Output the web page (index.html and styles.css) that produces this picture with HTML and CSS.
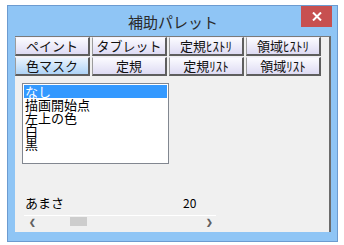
FILE: index.html
```html
<!DOCTYPE html>
<html lang="ja">
<head>
    <meta charset="UTF-8">
    <title>補助パレット</title>
    <link rel="stylesheet" href="styles.css">
</head>
<body>
    <div class="window">
        <div class="titlebar">
            <span class="title">補助パレット</span>
            <span class="close-btn">
                <svg width="10" height="9" viewBox="0 0 10 9"><path d="M1 0.5 L9 8.5 M9 0.5 L1 8.5" stroke="#fff" stroke-width="2"/></svg>
            </span>
        </div>
        <div class="client">
            <div class="tabs">
                <div class="tab">ペイント</div>
                <div class="tab">タブレット</div>
                <div class="tab">定規ﾋｽﾄﾘ</div>
                <div class="tab">領域ﾋｽﾄﾘ</div>
                <div class="tab active">色マスク</div>
                <div class="tab">定規</div>
                <div class="tab">定規ﾘｽﾄ</div>
                <div class="tab">領域ﾘｽﾄ</div>
            </div>

            <ul class="listbox">
                <li class="selected">なし</li>
                <li>描画開始点</li>
                <li>左上の色</li>
                <li>白</li>
                <li>黒</li>
            </ul>

            <div class="param-row">
                <span class="param-label">あまさ</span>
                <span class="param-value">20</span>
            </div>
            <div class="hscroll">
                <span class="arrow">&#10094;</span>
                <div class="track"><div class="thumb"></div></div>
                <span class="arrow">&#10095;</span>
            </div>
        </div>
    </div>
</body>
</html>
```

FILE: styles.css
```css
* {
    margin: 0;
    padding: 0;
    box-sizing: border-box;
}

body {
    background: #fff;
    font-family: "Noto Sans CJK JP", "Liberation Sans", sans-serif;
    color: #000;
}

.window {
    margin: 5px 0 0 7px;
    width: 331px;
    height: 237px;
    border: 1px solid #6c9bd0;
    background: #8fc5f5;
    padding: 0 6px 0 7px;
}

.titlebar {
    position: relative;
    height: 30px;
    text-align: center;
}

.title {
    display: inline-block;
    margin-top: 5px;
    font-size: 15px;
    line-height: 22px;
    color: #2a2a2a;
}

.close-btn {
    position: absolute;
    top: 0;
    right: -1px;
    width: 31px;
    height: 21px;
    background: #c75050;
    display: flex;
    align-items: center;
    justify-content: center;
}

.client {
    height: 196px;
    background: #f0f0f0;
    border-top: 1px solid #7a7a7a;
    border-right: 2px solid #6b6b6b;
    font-size: 12px;
}

.tabs {
    display: grid;
    grid-template-columns: repeat(4, 75px);
    grid-auto-rows: 19px;
    column-gap: 2px;
    row-gap: 1px;
}

.tab {
    background: linear-gradient(#fbfbff, #dedbf3);
    border-top: 1px solid #f4f2fc;
    border-left: 1px solid #9c9c9c;
    border-right: 2px solid #5e5e5e;
    border-bottom: 2px solid #5e5e5e;
    text-align: center;
    font-size: 13px;
    line-height: 16px;
    color: #111;
}

.tab.active {
    background: linear-gradient(#eaf4fe, #aed3f6);
}

.listbox {
    list-style: none;
    margin: 7px 0 0 7px;
    width: 147px;
    height: 81px;
    background: #fff;
    border: 1px solid #828790;
    padding: 1px;
}

.listbox li {
    height: 13px;
    line-height: 13px;
    font-size: 13px;
    padding-left: 1px;
}

.listbox li.selected {
    background: #3399ff;
    color: #fff;
}

.param-row {
    display: flex;
    margin: 32px 0 0 10px;
    height: 14px;
    line-height: 14px;
    font-size: 12px;
}

.param-label {
    width: 158px;
    font-size: 13px;
}

.hscroll {
    display: flex;
    align-items: center;
    margin: 5px 0 0 9px;
    width: 192px;
    height: 12px;
    border-top: 1px solid #fff;
    color: #606060;
    font-size: 8px;
}

.arrow {
    width: 14px;
    text-align: center;
    font-weight: bold;
}

.hscroll .arrow:first-child {
    margin-left: 1px;
}

.track {
    flex: 1;
    height: 9px;
    padding-left: 31px;
}

.thumb {
    width: 17px;
    height: 9px;
    background: #cdcdcd;
}
```
